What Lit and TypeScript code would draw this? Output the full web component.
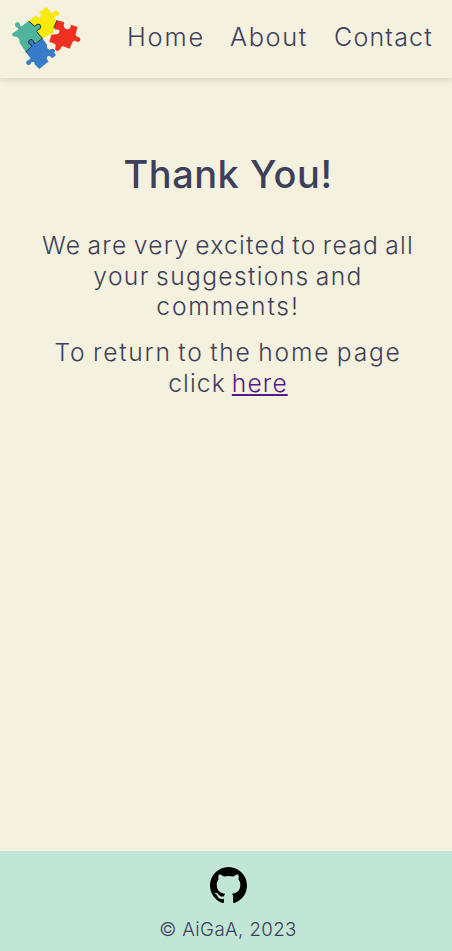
import { LitElement, html, css, svg } from "lit";
import { customElement } from "lit/decorators.js";

const pieces = svg`
  <path fill="#f8e80c" d="M86 63L107 47Q111 46 113 51Q119 56 123 50Q125 44 119 40L118 37L139 21L151 36Q156 41 160 37Q163 31 170 32Q177 34 178 41Q176 49 168 48Q161 48 162 53L171 62L161 83Q165 88 161 92Q159 96 161 99L151 101Q143 109 138 109L127 116L110 96Z"/>
  <path fill="#50b39b" d="M86 63L103 78Q107 79 108 75Q114 70 120 74Q125 81 120 86Q111 88 110 95L127 115L108 130L77 156L58 127Q61 119 54 113Q48 109 43 110Q35 107 36 101L51 91Q57 88 52 83Q45 81 45 74Q47 65 55 67Q61 71 61 77L65 79Z"/>
  <path fill="#387bc8" d="M127 115L141 134Q139 142 144 147Q149 151 153 147Q161 144 165 151Q166 155 162 157L168 166L156 175Q150 165 143 169Q138 174 142 180L146 184L118 207L103 192Q106 187 98 185Q93 185 91 193Q86 198 80 193Q76 186 81 182Q89 180 91 174L77 156L94 139L86 132Q82 123 91 118Q100 117 103 128L108 131Z"/>
  <path fill="#f03020" d="M171 61L191 66Q195 69 191 76Q192 86 200 88Q209 89 212 80L213 74L233 81L227 101Q226 108 232 110Q241 112 241 119Q239 127 231 126Q224 119 218 125L209 146L190 139Q184 137 182 145Q180 153 172 153Q164 151 166 143Q169 136 165 132L148 125L154 104Q164 102 172 103Q180 99 178 91Q174 87 167 89Q161 86 163 80Z"/>
  <path fill="none" stroke="#16352e" stroke-width="2.8" stroke-linejoin="round" d="M86 63L103 78Q107 79 108 75Q114 70 120 74Q125 81 120 86Q111 88 110 95L127 115L108 130L102 129Q101 119 93 118Q84 120 86 129Q88 133 94 134L96 138L77 156M171 61L161 84"/>`;

@customElement("app-root")
export class AppRoot extends LitElement {
  static styles = css`
    :host { display: flex; flex-direction: column; min-height: 100vh; background: #f4f1de; color: #3d405b; font-family: Inter, sans-serif; font-weight: 300; font-size: 24.6px; line-height: 30.6px; }
    header { box-sizing: border-box; height: 78px; padding: 6px 19px 0 11px; display: flex; justify-content: space-between; box-shadow: 0 2px 6px rgba(0, 0, 0, .13); }
    .logo { width: 70px; height: 64px; }
    nav { display: flex; gap: 26px; padding-top: 16px; }
    nav a { color: inherit; text-decoration: none; white-space: nowrap; }
    .home { width: 77px; font-size: 25.4px; letter-spacing: 1.8px; }
    .about { width: 78px; font-size: 25.4px; letter-spacing: 1.6px; }
    .contact { width: 99px; font-size: 25px; letter-spacing: 1.2px; }
    main { flex: 1; text-align: center; padding: 72px 0 0 4px; }
    h1 { margin: 0; font-size: 38px; font-weight: 500; line-height: 48px; letter-spacing: .5px; }
    p { margin: 32px 0 0; word-spacing: -2px; }
    p + p { margin-top: 15.6px; }
    p span { display: block; white-space: nowrap; }
    .excited { letter-spacing: 1.27px; }
    .suggestions { letter-spacing: 1.35px; }
    .comments { letter-spacing: 1.85px; }
    .return { letter-spacing: 1.77px; }
    .click { letter-spacing: 1.12px; }
    p a { color: #551a8b; text-decoration-thickness: 1.5px; text-underline-offset: 2px; }
    footer { box-sizing: border-box; height: 100px; background: #c1e6d5; padding: 16px 0 0 4px; display: flex; flex-direction: column; align-items: center; }
    .github { width: 37px; height: 37px; }
    small { font-size: 18.7px; line-height: 24px; margin-top: 14px; letter-spacing: .4px; }
  `;

  render() {
    return html`
      <header>
        <svg class="logo" viewBox="33 18 210 192">${pieces}</svg>
        <nav><a class="home" href="#">Home</a><a class="about" href="#">About</a><a class="contact" href="#">Contact</a></nav>
      </header>
      <main>
        <h1>Thank You!</h1>
        <p><span class="excited">We are very excited to read all</span><span class="suggestions">your suggestions and</span><span class="comments">comments!</span></p>
        <p><span class="return">To return to the home page</span><span class="click">click <a href="#">here</a></span></p>
      </main>
      <footer>
        <svg class="github" viewBox="0 0 16 16"><path d="M8 0C3.58 0 0 3.58 0 8c0 3.54 2.29 6.53 5.47 7.59.4.07.55-.17.55-.38 0-.19-.01-.82-.01-1.49-2.01.37-2.53-.49-2.69-.94-.09-.23-.48-.94-.82-1.13-.28-.15-.68-.52-.01-.53.63-.01 1.08.58 1.23.82.72 1.21 1.87.87 2.33.66.07-.52.28-.87.51-1.07-1.78-.2-3.64-.89-3.64-3.95 0-.87.31-1.59.82-2.15-.08-.2-.36-1.02.08-2.12 0 0 .67-.21 2.2.82.64-.18 1.32-.27 2-.27s1.36.09 2 .27c1.53-1.04 2.2-.82 2.2-.82.44 1.1.16 1.92.08 2.12.51.56.82 1.27.82 2.15 0 3.07-1.87 3.75-3.65 3.95.29.25.54.73.54 1.48 0 1.07-.01 1.93-.01 2.2 0 .21.15.46.55.38A8.01 8.01 0 0 0 16 8c0-4.42-3.58-8-8-8Z"/></svg>
        <small>© AiGaA, 2023</small>
      </footer>`;
  }
}
